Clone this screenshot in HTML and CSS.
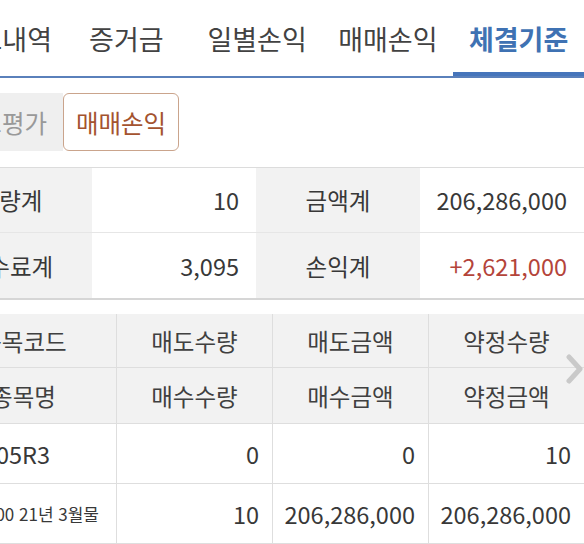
FILE: index.html
```html
<!DOCTYPE html>
<html lang="ko">
<head>
    <meta charset="UTF-8">
    <meta name="viewport" content="width=device-width, initial-scale=1.0">
    <title>체결기준</title>
    <link rel="stylesheet" href="styles.css">
</head>
<body>
    <nav class="tabs">
        <div class="tab tab-first"><span>잔고내역</span></div>
        <div class="tab">증거금</div>
        <div class="tab">일별손익</div>
        <div class="tab">매매손익</div>
        <div class="tab active">체결기준</div>
    </nav>

    <div class="modes">
        <div class="mode mode-off"><span>잔고평가</span></div>
        <div class="mode mode-on">매매손익</div>
    </div>

    <section class="summary">
        <div class="cell label">수량계</div>
        <div class="cell value">10</div>
        <div class="cell label">금액계</div>
        <div class="cell value">206,286,000</div>
        <div class="cell label last">수수료계</div>
        <div class="cell value last">3,095</div>
        <div class="cell label last">손익계</div>
        <div class="cell value last plus">+2,621,000</div>
    </section>

    <section class="grid">
        <div class="th">종목코드</div>
        <div class="th">매도수량</div>
        <div class="th">매도금액</div>
        <div class="th">약정수량</div>
        <div class="th th2">종목명</div>
        <div class="th th2">매수수량</div>
        <div class="th th2">매수금액</div>
        <div class="th th2">약정금액</div>

        <div class="td code">105R3</div>
        <div class="td num">0</div>
        <div class="td num">0</div>
        <div class="td num">10</div>
        <div class="td name"><span>미니코스피200 21년 3월물</span></div>
        <div class="td num">10</div>
        <div class="td num">206,286,000</div>
        <div class="td num">206,286,000</div>

        <svg class="more" width="18" height="30" viewBox="0 0 18 30">
            <polyline points="3,3 14,15 3,27" fill="none" stroke="#c9c9c9" stroke-width="5" stroke-linejoin="round" stroke-linecap="round"/>
        </svg>
    </section>
</body>
</html>
```

FILE: styles.css
```css
body {
    margin: 0;
    width: 584px;
    overflow: hidden;
    font-family: "Noto Sans CJK KR", "Noto Sans", sans-serif;
    color: #383838;
    background: #fff;
}

/* tabs */
.tabs {
    display: grid;
    grid-template-columns: 61px repeat(4, 1fr);
    border-bottom: 2px solid #5a80bb;
}
.tab {
    height: 76px;
    display: flex;
    align-items: center;
    justify-content: center;
    font-size: 27px;
    color: #424242;
    white-space: nowrap;
}
.tab-first {
    justify-content: flex-end;
    padding-right: 9px;
}
.tab.active {
    color: #3f72b3;
    font-weight: bold;
    box-shadow: inset 0 -4px 0 #4675bb;
}

/* buy/sell toggle */
.modes {
    display: flex;
    margin: 15px 0 16px;
    height: 58px;
}
.mode {
    display: flex;
    align-items: center;
    font-size: 24.5px;
    white-space: nowrap;
    box-sizing: border-box;
}
.mode-off {
    width: 63px;
    justify-content: flex-end;
    padding-right: 16px;
    background: #efefef;
    color: #999;
}
.mode-on {
    padding: 0 12px;
    border: 1px solid #caa48c;
    border-radius: 6px;
    background: #fff;
    color: #a4532f;
}

/* totals */
.summary {
    display: grid;
    grid-template-columns: repeat(4, 164px);
    margin-left: -72px;
    border-top: 1px solid #dcdcdc;
    border-bottom: 2px solid #d6d6d6;
}
.summary .cell {
    height: 64px;
    display: flex;
    align-items: center;
    border-bottom: 1px solid #e6e6e6;
    white-space: nowrap;
}
.summary .cell.last {
    height: 65px;
    border-bottom: none;
}
.summary .label {
    justify-content: center;
    background: #f2f2f2;
    font-size: 23.5px;
}
.summary .value {
    justify-content: flex-end;
    padding-right: 17px;
    font-size: 23.5px;
}
.summary .plus {
    color: #b4443a;
}

/* detail list */
.grid {
    position: relative;
    display: grid;
    grid-template-columns: 186px repeat(3, 156px);
    grid-template-rows: 54px 56px 60px 60px;
    margin-top: 14px;
    margin-left: -69px;
}
.th, .td {
    display: flex;
    align-items: center;
    box-sizing: border-box;
    border-right: 1px solid #dedede;
    border-bottom: 1px solid #dedede;
    white-space: nowrap;
}
.th {
    justify-content: center;
    background: #f2f2f2;
    font-size: 23.5px;
    color: #404040;
}
.td {
    font-size: 23.5px;
}
.num {
    justify-content: flex-end;
    padding-right: 13px;
}
.code {
    justify-content: center;
    padding-right: 14px;
}
.name {
    justify-content: flex-end;
    padding-right: 17px;
    font-size: 17px;
}
.more {
    position: absolute;
    left: 635px;
    top: 40px;
}
```
